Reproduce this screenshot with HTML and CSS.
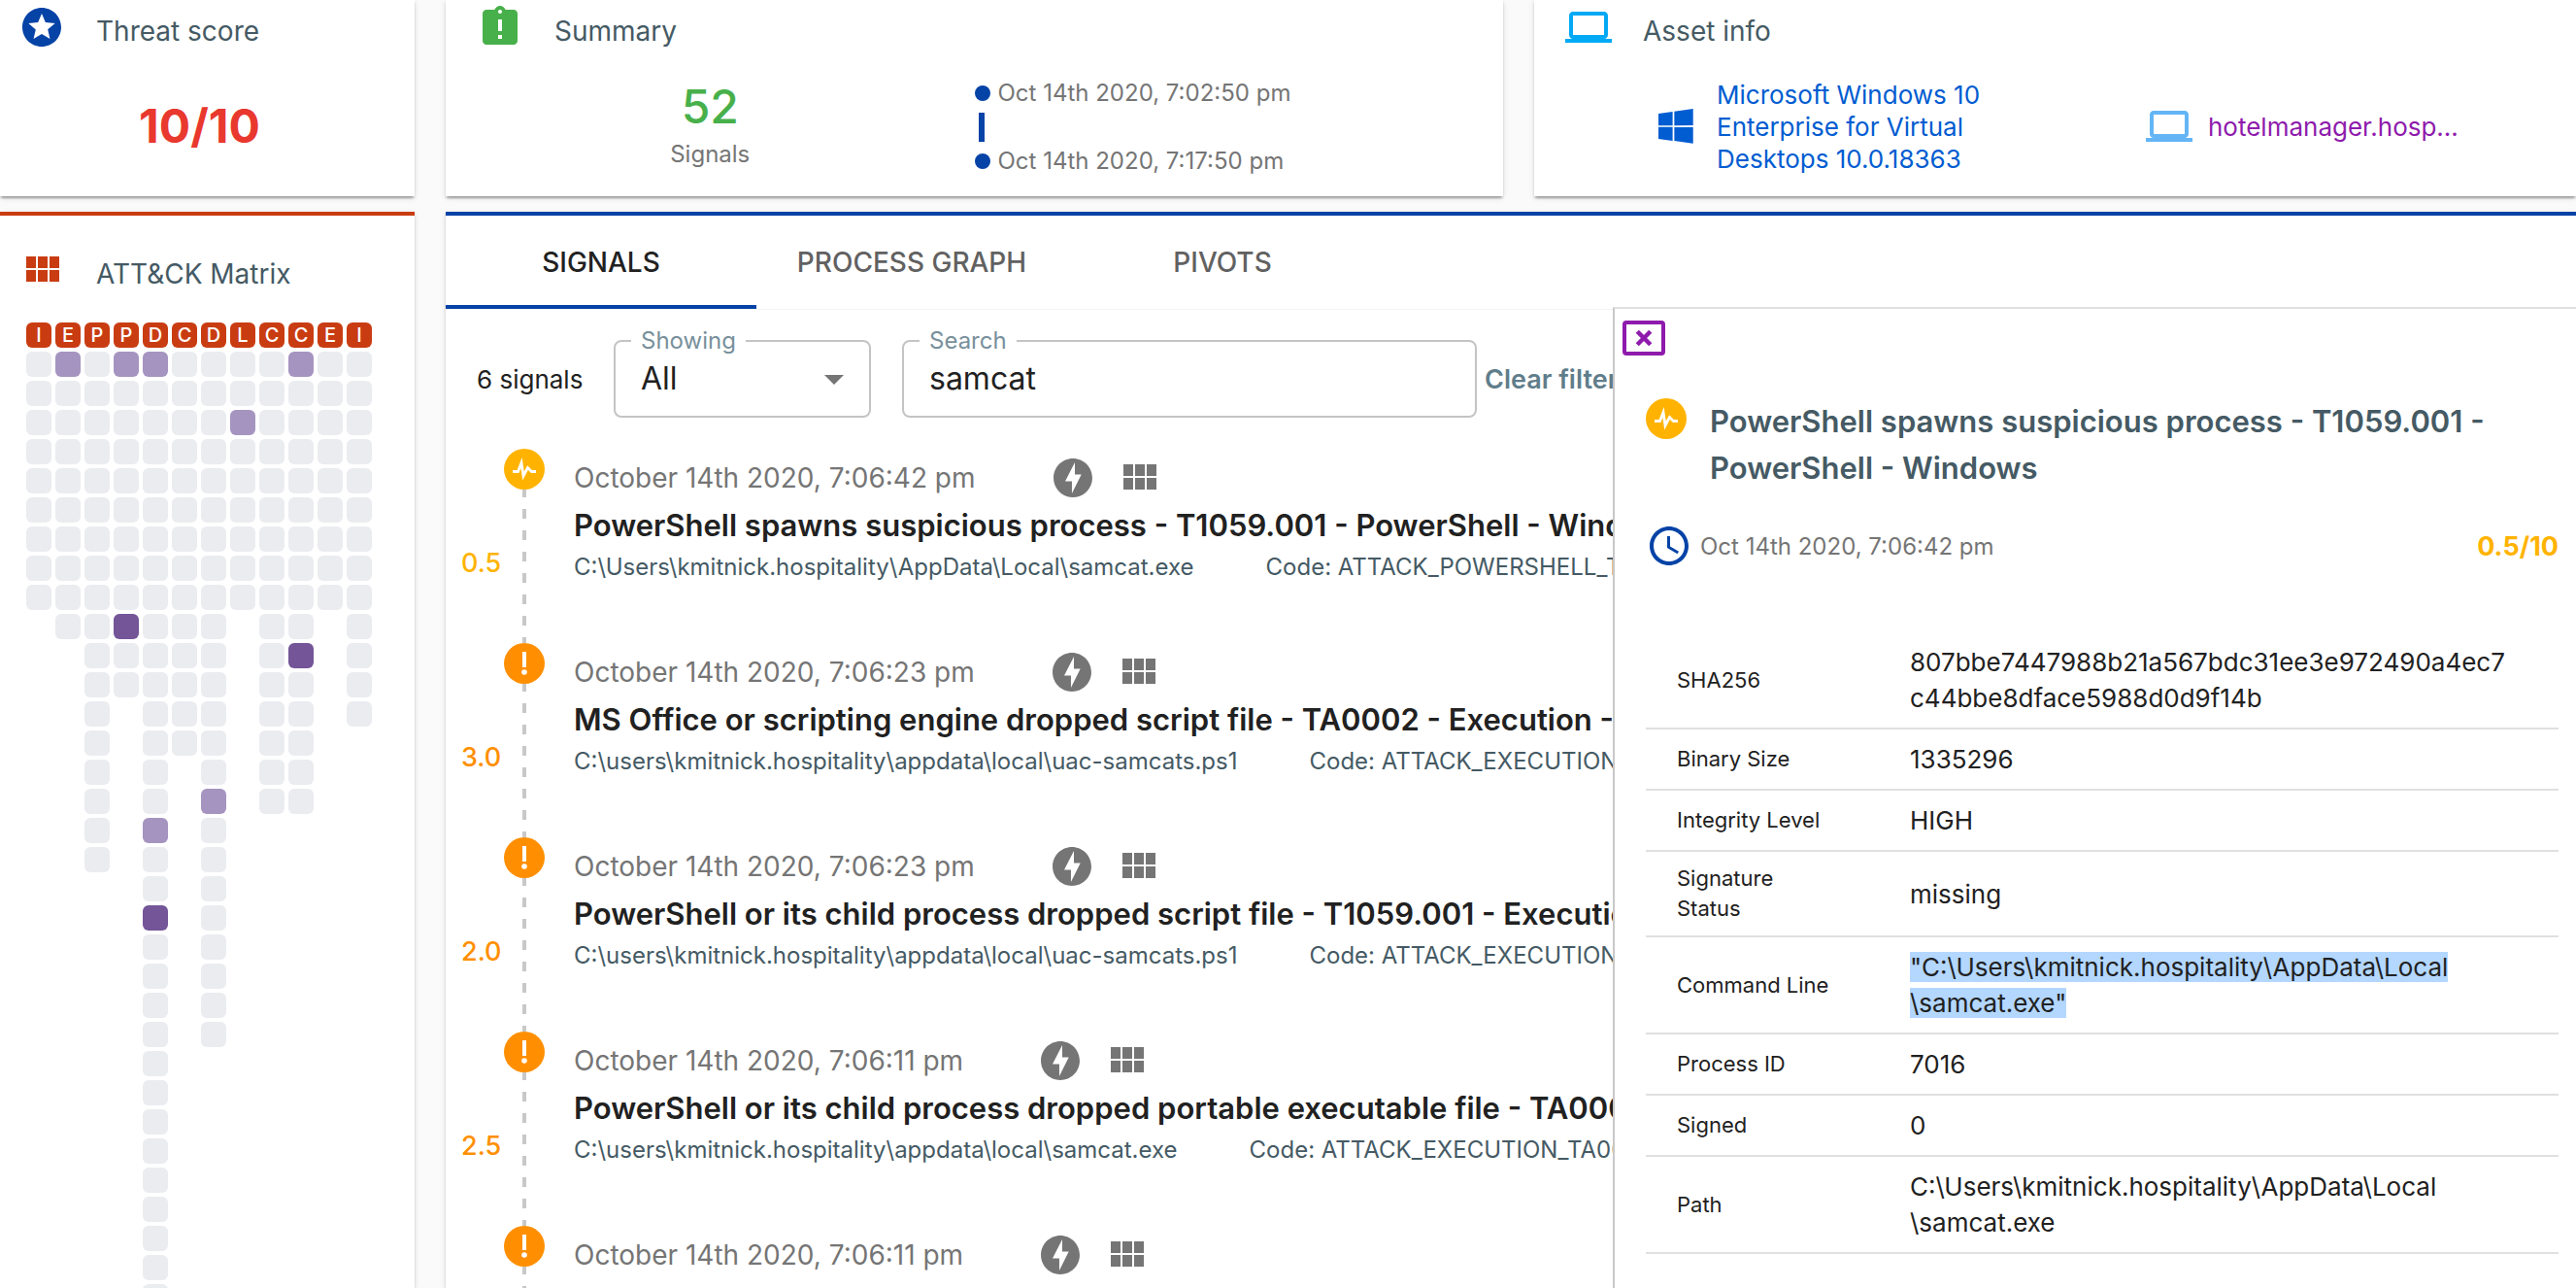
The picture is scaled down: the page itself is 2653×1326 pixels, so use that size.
FILE: index.html
```
<!DOCTYPE html>
<html lang="en">
<head>
    <meta charset="UTF-8">
    <meta name="viewport" content="width=device-width, initial-scale=1.0">
    <title>Threat signals</title>
    <link rel="stylesheet" href="styles.css">
</head>
<body>
    <svg class="sprite" aria-hidden="true">
        <symbol id="i-star" viewBox="0 0 24 24"><path d="M11.99 2C6.47 2 2 6.48 2 12s4.47 10 9.99 10C17.52 22 22 17.52 22 12S17.52 2 11.99 2zm4.24 16L12 15.45 7.77 18l1.12-4.81-3.73-3.23 4.92-.42L12 5l1.92 4.53 4.92.42-3.73 3.23L16.23 18z"/></symbol>
        <symbol id="i-late" viewBox="0 0 24 24"><path d="M19 3h-4.18C14.4 1.84 13.3 1 12 1c-1.3 0-2.4.84-2.82 2H5c-1.1 0-2 .9-2 2v14c0 1.1.9 2 2 2h14c1.1 0 2-.9 2-2V5c0-1.1-.9-2-2-2zm-6 15h-2v-2h2v2zm0-4h-2V8h2v6zm-1-9c-.55 0-1-.45-1-1s.45-1 1-1 1 .45 1 1-.45 1-1 1z"/></symbol>
        <symbol id="i-laptop" viewBox="0 0 24 24"><path d="M20 18c1.1 0 1.99-.9 1.99-2L22 6c0-1.1-.9-2-2-2H4c-1.1 0-2 .9-2 2v10c0 1.1.9 2 2 2H0v2h24v-2h-4zM4 6h16v10H4V6z"/></symbol>
        <symbol id="i-module" viewBox="0 0 24 24"><path d="M4 11h5V5H4v6zm0 7h5v-6H4v6zm6 0h5v-6h-5v6zm6 0h5v-6h-5v6zm-6-7h5V5h-5v6zm6-6v6h5V5h-5z"/></symbol>
        <symbol id="i-bolt" viewBox="0 0 24 24"><path d="M12 2.02c-5.51 0-9.98 4.47-9.98 9.98s4.47 9.98 9.98 9.98 9.98-4.47 9.98-9.98S17.51 2.02 12 2.02zM11.48 20v-6.26H8L13 4v6.26h3.35L11.48 20z"/></symbol>
        <symbol id="i-clock" viewBox="0 0 24 24"><path d="M11.99 2C6.47 2 2 6.48 2 12s4.47 10 9.99 10C17.52 22 22 17.52 22 12S17.52 2 11.99 2zM12 20c-4.42 0-8-3.58-8-8s3.58-8 8-8 8 3.58 8 8-3.58 8-8 8zm.5-13H11v6l5.25 3.15.75-1.23-4.5-2.67z"/></symbol>
        <symbol id="i-windows" viewBox="0 0 88 88"><path d="M0 12.4l35.7-4.86v34.42L0 42.17zm35.7 33.53v34.45L0 75.48V45.7zM40 6.9L87.3 0v41.53L40 41.9zm47.3 39.35v41.34L40 80.9V46.17z"/></symbol>
        <symbol id="i-pulse" viewBox="0 0 42 42"><circle cx="21" cy="21" r="21"/><path d="M9 23.5h5.5l3.5-9 2 13.5 4.5-8.500 4 4H33" fill="none" stroke="#fff" stroke-width="2.8"/></symbol>
        <symbol id="i-alert" viewBox="0 0 42 42"><circle cx="21" cy="21" r="21"/><path d="M19 9h4v16h-4z" fill="#fff"/><circle cx="21" cy="30" r="2.8" fill="#fff"/></symbol>
    </svg>

    <div class="layout">
        <section class="card threat">
            <header class="card-head">
                <svg class="icon blue"><use href="#i-star"/></svg>
                <h2>Threat score</h2>
            </header>
            <div class="threat-value">10/10</div>
        </section>

        <div class="top-row">
            <section class="card">
                <header class="card-head">
                    <svg class="icon green"><use href="#i-late"/></svg>
                    <h2>Summary</h2>
                </header>
                <div class="summary-body">
                    <div class="count">
                        <strong>52</strong>
                        <span>Signals</span>
                    </div>
                    <div class="range">
                        <p>Oct 14th 2020, 7:02:50 pm</p>
                        <i></i>
                        <p>Oct 14th 2020, 7:17:50 pm</p>
                    </div>
                </div>
            </section>

            <section class="card">
                <header class="card-head">
                    <svg class="icon sky"><use href="#i-laptop"/></svg>
                    <h2>Asset info</h2>
                </header>
                <div class="asset-body">
                    <a class="asset os" href="#">
                        <svg class="icon-os"><use href="#i-windows"/></svg>
                        <span>Microsoft Windows 10 Enterprise for Virtual Desktops 10.0.18363</span>
                    </a>
                    <a class="asset host" href="#">
                        <svg class="icon"><use href="#i-laptop"/></svg>
                        <span>hotelmanager.hosp...</span>
                    </a>
                </div>
            </section>
        </div>

        <section class="card matrix-card">
            <header class="card-head">
                <svg class="icon"><use href="#i-module"/></svg>
                <h2>ATT&amp;CK Matrix</h2>
            </header>
            <div class="matrix" id="matrix"></div>
        </section>

        <main class="card main">
            <nav class="tabs">
                <button class="tab active" type="button">SIGNALS</button>
                <button class="tab" type="button">PROCESS GRAPH</button>
                <button class="tab" type="button">PIVOTS</button>
            </nav>

            <div class="panes">
                <div class="list">
                    <form class="filters">
                        <span class="total">6 signals</span>
                        <div class="field showing">
                            <label for="showing">Showing</label>
                            <select id="showing"><option>All</option></select>
                            <svg class="arrow" viewBox="0 0 20 10"><path d="M0 0h20L10 10z"/></svg>
                        </div>
                        <div class="field search">
                            <label for="search">Search</label>
                            <input type="text" id="search" value="samcat">
                        </div>
                        <button class="clear" type="button">Clear filters</button>
                    </form>

                    <ul class="signals">
                        <li class="signal low">
                            <span class="score">0.5</span>
                            <div class="rail"><svg><use href="#i-pulse"/></svg></div>
                            <div class="info">
                                <div class="when"><time>October 14th 2020, 7:06:42 pm</time><svg class="icon"><use href="#i-bolt"/></svg><svg class="icon"><use href="#i-module"/></svg></div>
                                <h3>PowerShell spawns suspicious process - T1059.001 - PowerShell - Windows</h3>
                                <p><span>C:\Users\kmitnick.hospitality\AppData\Local\samcat.exe</span><span>Code: ATTACK_POWERSHELL_T1059</span></p>
                            </div>
                        </li>
                        <li class="signal">
                            <span class="score">3.0</span>
                            <div class="rail"><svg><use href="#i-alert"/></svg></div>
                            <div class="info">
                                <div class="when"><time>October 14th 2020, 7:06:23 pm</time><svg class="icon"><use href="#i-bolt"/></svg><svg class="icon"><use href="#i-module"/></svg></div>
                                <h3>MS Office or scripting engine dropped script file - TA0002 - Execution - Windows</h3>
                                <p><span>C:\users\kmitnick.hospitality\appdata\local\uac-samcats.ps1</span><span>Code: ATTACK_EXECUTION_TA0002</span></p>
                            </div>
                        </li>
                        <li class="signal">
                            <span class="score">2.0</span>
                            <div class="rail"><svg><use href="#i-alert"/></svg></div>
                            <div class="info">
                                <div class="when"><time>October 14th 2020, 7:06:23 pm</time><svg class="icon"><use href="#i-bolt"/></svg><svg class="icon"><use href="#i-module"/></svg></div>
                                <h3>PowerShell or its child process dropped script file - T1059.001 - Execution</h3>
                                <p><span>C:\users\kmitnick.hospitality\appdata\local\uac-samcats.ps1</span><span>Code: ATTACK_EXECUTION_T1059</span></p>
                            </div>
                        </li>
                        <li class="signal">
                            <span class="score">2.5</span>
                            <div class="rail"><svg><use href="#i-alert"/></svg></div>
                            <div class="info">
                                <div class="when"><time>October 14th 2020, 7:06:11 pm</time><svg class="icon"><use href="#i-bolt"/></svg><svg class="icon"><use href="#i-module"/></svg></div>
                                <h3>PowerShell or its child process dropped portable executable file - TA0002</h3>
                                <p><span>C:\users\kmitnick.hospitality\appdata\local\samcat.exe</span><span>Code: ATTACK_EXECUTION_TA0002</span></p>
                            </div>
                        </li>
                        <li class="signal">
                            <span class="score"></span>
                            <div class="rail"><svg><use href="#i-alert"/></svg></div>
                            <div class="info">
                                <div class="when"><time>October 14th 2020, 7:06:11 pm</time><svg class="icon"><use href="#i-bolt"/></svg><svg class="icon"><use href="#i-module"/></svg></div>
                            </div>
                        </li>
                    </ul>
                </div>

                <aside class="detail">
                    <button class="close" type="button" aria-label="Close">
                        <svg viewBox="0 0 16 16"><path d="M2 2l12 12M14 2L2 14"/></svg>
                    </button>
                    <div class="detail-body">
                        <div class="detail-title">
                            <svg><use href="#i-pulse"/></svg>
                            <h2>PowerShell spawns suspicious process - T1059.001 - PowerShell - Windows</h2>
                        </div>
                        <div class="detail-time">
                            <svg class="icon blue"><use href="#i-clock"/></svg>
                            <time>Oct 14th 2020, 7:06:42 pm</time>
                            <strong>0.5/10</strong>
                        </div>
                        <table>
                            <tr><th scope="row">SHA256</th><td>807bbe7447988b21a567bdc31ee3e972490a4ec7<br>c44bbe8dface5988d0d9f14b</td></tr>
                            <tr><th scope="row">Binary Size</th><td>1335296</td></tr>
                            <tr><th scope="row">Integrity Level</th><td>HIGH</td></tr>
                            <tr><th scope="row">Signature Status</th><td>missing</td></tr>
                            <tr><th scope="row">Command Line</th><td><mark>"C:\Users\kmitnick.hospitality\AppData\Local<br>\samcat.exe"</mark></td></tr>
                            <tr><th scope="row">Process ID</th><td>7016</td></tr>
                            <tr><th scope="row">Signed</th><td>0</td></tr>
                            <tr><th scope="row">Path</th><td>C:\Users\kmitnick.hospitality\AppData\Local<br>\samcat.exe</td></tr>
                        </table>
                    </div>
                </aside>
            </div>
        </main>
    </div>

    <script>
        // One entry per tactic: letter, number of techniques, hit rows
        const tactics = [
            { letter: 'I', count: 9 },
            { letter: 'E', count: 10, light: [1] },
            { letter: 'P', count: 18 },
            { letter: 'P', count: 12, light: [1], dark: [10] },
            { letter: 'D', count: 34, light: [1, 17], dark: [20] },
            { letter: 'C', count: 14 },
            { letter: 'D', count: 24, light: [16] },
            { letter: 'L', count: 9, light: [3] },
            { letter: 'C', count: 16 },
            { letter: 'C', count: 16, light: [1], dark: [11] },
            { letter: 'E', count: 9 },
            { letter: 'I', count: 13 }
        ];

        const matrix = document.getElementById('matrix');
        tactics.forEach(t => {
            const col = document.createElement('div');
            col.className = 'tactic';
            col.innerHTML = `<b>${t.letter}</b>`;
            for (let row = 1; row <= t.count; row++) {
                const cell = document.createElement('i');
                if (t.light && t.light.includes(row)) cell.className = 'light';
                if (t.dark && t.dark.includes(row)) cell.className = 'dark';
                col.appendChild(cell);
            }
            matrix.appendChild(col);
        });
    </script>
</body>
</html>
```
FILE: styles.css
```
* {
    box-sizing: border-box;
}

body {
    margin: 0;
    height: 100vh;
    overflow: hidden;
    background-color: #fafafa;
    color: #212121;
    font-family: Inter, "Liberation Sans", sans-serif;
    font-size: 26px;
}

h2, h3, p, ul {
    margin: 0;
    padding: 0;
}

button, input, select {
    font-family: inherit;
    color: inherit;
    background: none;
    border: none;
    outline: none;
}

a {
    text-decoration: none;
}

svg {
    display: block;
    flex: none;
    fill: currentColor;
}

.sprite {
    position: absolute;
    width: 0;
    height: 0;
}

.icon {
    width: 48px;
    height: 48px;
}

.blue {
    color: #0543a6;
}

.green {
    color: #48b04b;
}

.sky {
    color: #03a9f4;
}

.layout {
    display: grid;
    grid-template-columns: 427px minmax(0, 1fr);
    grid-template-rows: 202px minmax(0, 1fr);
    gap: 16px 32px;
    height: 100vh;
}

.top-row {
    display: grid;
    grid-template-columns: 1089fr 1073fr;
    gap: 32px;
}

.card {
    display: flex;
    flex-direction: column;
    background-color: #fff;
    box-shadow: 0 4px 2px -2px rgba(0, 0, 0, 0.2), 0 2px 2px rgba(0, 0, 0, 0.14), 0 2px 6px rgba(0, 0, 0, 0.12);
}

.card-head {
    display: flex;
    align-items: center;
    gap: 32px;
    height: 60px;
    padding: 4px 32px 8px;
}

.card-head h2 {
    padding-top: 8px;
    font-size: 28px;
    font-weight: 400;
    color: #455a64;
}

.threat .card-head,
.matrix-card .card-head {
    padding-left: 19px;
}

.threat-value {
    display: flex;
    flex: 1;
    align-items: center;
    justify-content: center;
    padding: 0 16px 4px 0;
    font-size: 48px;
    font-weight: 700;
    color: #e9382e;
}

/* Summary */
.summary-body {
    display: grid;
    grid-template-columns: 1fr 1fr;
    flex: 1;
    align-items: center;
    color: #757575;
    font-size: 24px;
}

.count {
    text-align: center;
}

.count strong {
    display: block;
    font-size: 48px;
    font-weight: 500;
    line-height: 56px;
    color: #48b04b;
}

.count span {
    line-height: 42px;
}

.range p {
    display: flex;
    align-items: center;
    gap: 8px;
    line-height: 32px;
}

.range p:before {
    content: "";
    width: 16px;
    height: 16px;
    border-radius: 50%;
    background-color: #0543a6;
}

.range i {
    display: block;
    width: 6px;
    height: 30px;
    margin: 4px;
    background-color: #0543a6;
}

/* Asset info */
.asset-body {
    display: grid;
    grid-template-columns: 502px 1fr;
    flex: 1;
    align-items: center;
    padding: 0 0 2px 128px;
    line-height: 33px;
}

.asset {
    display: flex;
    align-items: center;
}

.os {
    gap: 24px;
    color: #005cd1;
}

.os span {
    width: 300px;
}

.icon-os {
    width: 36px;
    height: 38px;
}

.host {
    gap: 16px;
    color: #8e1bac;
}

.host .icon {
    color: #64b5f6;
}

/* ATT&CK matrix */
.matrix-card {
    overflow: hidden;
    border-top: 4px solid #c93c12;
    color: #c93c12;
}

.matrix-card .card-head {
    margin-top: 28px;
}

.matrix {
    display: flex;
    gap: 4px;
    padding: 22px 27px;
}

.tactic {
    display: flex;
    flex-direction: column;
    gap: 4px;
}

.tactic b,
.tactic i {
    width: 26px;
    height: 26px;
    border-radius: 6px;
    background-color: #ebecf0;
}

.tactic b {
    background-color: #c93c12;
    color: #fff;
    font-size: 20px;
    font-weight: 500;
    line-height: 26px;
    text-align: center;
}

.tactic .light {
    background-color: #a594c0;
}

.tactic .dark {
    background-color: #735598;
}

/* Main card */
.main {
    border-top: 4px solid #0543a6;
}

.tabs {
    display: flex;
    height: 96px;
    box-shadow: 0 1px 0 #f4f4f4;
}

.tab {
    width: 320px;
    padding: 0;
    border-top: 4px solid transparent;
    border-bottom: 4px solid transparent;
    font-size: 28px;
    font-weight: 500;
    color: #616161;
}

.tab.active {
    border-bottom-color: #0543a6;
    color: #212121;
}

.panes {
    display: grid;
    grid-template-columns: minmax(0, 1202fr) minmax(0, 992fr);
    flex: 1;
    min-height: 0;
}

.list {
    overflow: hidden;
    padding-top: 32px;
    white-space: nowrap;
}

.filters {
    display: flex;
    align-items: center;
    padding-left: 32px;
}

.filters > * {
    flex: none;
}

.total {
    width: 141px;
}

.field {
    position: relative;
    height: 80px;
    margin-right: 32px;
    border: 2px solid #c4c4c4;
    border-radius: 8px;
}

.field label {
    position: absolute;
    top: -16px;
    left: 16px;
    padding: 0 10px;
    background-color: #fff;
    color: #78909c;
    font-size: 24px;
    line-height: 30px;
}

.field select,
.field input {
    width: 100%;
    height: 100%;
    padding: 0 26px 2px;
    font-size: 32px;
    appearance: none;
}

.showing {
    width: 265px;
}

.search {
    width: 592px;
    margin-right: 8px;
}

.arrow {
    position: absolute;
    top: 34px;
    right: 26px;
    width: 20px;
    height: 10px;
    color: #757575;
    pointer-events: none;
}

.clear {
    padding: 0;
    font-size: 27px;
    font-weight: 600;
    color: #607d8b;
}

.signals {
    margin-top: 32px;
    list-style: none;
}

.signal {
    display: flex;
    height: 200px;
    color: #ff8f00;
}

.signal.low {
    color: #ffb300;
}

.score {
    flex: none;
    width: 60px;
    padding: 100px 0 0 16px;
    font-size: 27px;
    font-weight: 500;
    line-height: 36px;
}

.rail {
    display: flex;
    flex: none;
    flex-direction: column;
    align-items: center;
    width: 42px;
    margin-right: 30px;
}

.rail svg {
    width: 42px;
    height: 42px;
}

/* dashed line down to the next signal */
.rail:after {
    content: "";
    flex: 1;
    width: 4px;
    background: linear-gradient(#c8c8c8 10px, transparent 10px) 0 -2px / 4px 22px;
}

.info {
    padding-top: 6px;
}

.when {
    display: flex;
    align-items: center;
    gap: 20px;
    color: #757575;
    font-size: 28px;
}

.when time {
    margin-right: 56px;
}

.info h3 {
    font-size: 31px;
    font-weight: 600;
    line-height: 50px;
    color: #212121;
}

.info p {
    display: flex;
    gap: 74px;
    font-size: 24px;
    line-height: 36px;
    color: #455a64;
}

/* Detail panel */
.detail {
    margin-top: -2px;
    overflow: hidden;
    border-top: 2px solid #e0e0e0;
    border-left: 2px solid #c8c8c8;
    background-color: #fff;
}

.close {
    display: flex;
    align-items: center;
    justify-content: center;
    width: 44px;
    height: 36px;
    margin: 12px 8px;
    padding: 0;
    border: 4px solid #8e1bac;
    border-radius: 4px;
    color: #8e1bac;
}

.close svg {
    width: 18px;
    height: 18px;
    stroke: currentColor;
    stroke-width: 4;
}

.detail-body {
    padding: 32px 18px 0 32px;
}

.detail-title {
    display: flex;
    gap: 24px;
}

.detail-title svg {
    width: 42px;
    height: 42px;
    color: #ffb300;
}

.detail-title h2 {
    max-width: 840px;
    font-size: 31px;
    font-weight: 600;
    line-height: 48px;
    color: #455a64;
}

.detail-time {
    display: flex;
    align-items: center;
    gap: 8px;
    margin: 32px 0 65px;
    color: #757575;
    font-size: 24px;
}

.detail-time strong {
    margin-left: auto;
    font-size: 27px;
    font-weight: 700;
    color: #ffb300;
}

table {
    width: 100%;
    border-collapse: collapse;
}

th,
td {
    padding: 12px 0;
    border-bottom: 2px solid #e0e0e0;
    line-height: 37px;
    text-align: left;
}

th {
    width: 272px;
    padding: 12px 80px 12px 32px;
    font-size: 22px;
    font-weight: 400;
    line-height: 31px;
}

mark {
    background-color: #b3d7ff;
    color: inherit;
}
```
